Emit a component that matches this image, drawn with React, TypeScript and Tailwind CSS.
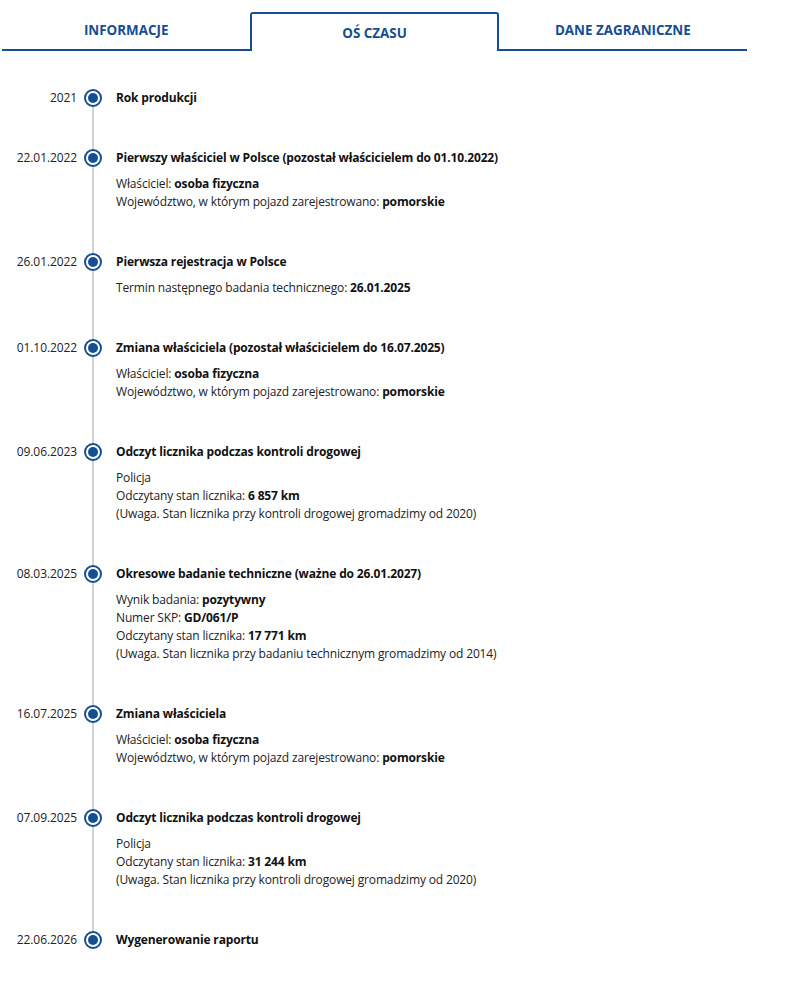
import React from 'react';

type Line = { label?: string; value?: string; text?: string };

interface Entry {
  date: string;
  title: string;
  lines?: Line[];
}

const entries: Entry[] = [
  { date: '2021', title: 'Rok produkcji' },
  {
    date: '22.01.2022',
    title: 'Pierwszy właściciel w Polsce (pozostał właścicielem do 01.10.2022)',
    lines: [
      { label: 'Właściciel: ', value: 'osoba fizyczna' },
      { label: 'Województwo, w którym pojazd zarejestrowano: ', value: 'pomorskie' },
    ],
  },
  {
    date: '26.01.2022',
    title: 'Pierwsza rejestracja w Polsce',
    lines: [{ label: 'Termin następnego badania technicznego: ', value: '26.01.2025' }],
  },
  {
    date: '01.10.2022',
    title: 'Zmiana właściciela (pozostał właścicielem do 16.07.2025)',
    lines: [
      { label: 'Właściciel: ', value: 'osoba fizyczna' },
      { label: 'Województwo, w którym pojazd zarejestrowano: ', value: 'pomorskie' },
    ],
  },
  {
    date: '09.06.2023',
    title: 'Odczyt licznika podczas kontroli drogowej',
    lines: [
      { text: 'Policja' },
      { label: 'Odczytany stan licznika: ', value: '6 857 km' },
      { text: '(Uwaga. Stan licznika przy kontroli drogowej gromadzimy od 2020)' },
    ],
  },
  {
    date: '08.03.2025',
    title: 'Okresowe badanie techniczne (ważne do 26.01.2027)',
    lines: [
      { label: 'Wynik badania: ', value: 'pozytywny' },
      { label: 'Numer SKP: ', value: 'GD/061/P' },
      { label: 'Odczytany stan licznika: ', value: '17 771 km' },
      { text: '(Uwaga. Stan licznika przy badaniu technicznym gromadzimy od 2014)' },
    ],
  },
  {
    date: '16.07.2025',
    title: 'Zmiana właściciela',
    lines: [
      { label: 'Właściciel: ', value: 'osoba fizyczna' },
      { label: 'Województwo, w którym pojazd zarejestrowano: ', value: 'pomorskie' },
    ],
  },
  {
    date: '07.09.2025',
    title: 'Odczyt licznika podczas kontroli drogowej',
    lines: [
      { text: 'Policja' },
      { label: 'Odczytany stan licznika: ', value: '31 244 km' },
      { text: '(Uwaga. Stan licznika przy kontroli drogowej gromadzimy od 2020)' },
    ],
  },
  { date: '22.06.2026', title: 'Wygenerowanie raportu' },
];

const tabs = ['INFORMACJE', 'OŚ CZASU', 'DANE ZAGRANICZNE'];

function Tabs({ active }: { active: number }) {
  return (
    <div className="ml-[2px] grid w-[745px] grid-cols-3 pt-[12px]">
      {tabs.map((t, i) =>
        i === active ? (
          <div
            key={t}
            className="flex h-[39px] items-center justify-center rounded-t-[3px] border-2 border-b-0 border-[#154e91] pt-[2px] text-[13.4px] font-bold text-[#154e91]"
          >
            {t}
          </div>
        ) : (
          <div
            key={t}
            className="flex h-[39px] items-center justify-center border-b-2 border-[#154e91] text-[13.4px] font-bold text-[#154e91]"
          >
            {t}
          </div>
        )
      )}
    </div>
  );
}

function Marker() {
  return (
    <div className="flex h-[18px] w-[18px] shrink-0 items-center justify-center rounded-full border-2 border-[#154e91] bg-white">
      <div className="h-[10px] w-[10px] rounded-full bg-[#154e91]" />
    </div>
  );
}

function TimelineRow({ entry, last }: { entry: Entry; last: boolean }) {
  return (
    <div className="flex">
      <div className="w-[77px] shrink-0 text-right text-[12px] leading-[18px] tracking-[-0.1px] text-[#222]">
        {entry.date}
      </div>
      <div className="ml-[7px] flex w-[18px] shrink-0 flex-col items-center">
        <Marker />
        {!last && <div className="w-[2px] flex-1 bg-[#cfd3d8]" />}
      </div>
      <div className="ml-[14px] pb-[42px] tracking-[-0.15px]">
        <div className="text-[12px] font-bold leading-[18px] text-[#111]">{entry.title}</div>
        {entry.lines && (
          <div className="mt-[8px] text-[12px] leading-[18px] text-[#222]">
            {entry.lines.map((l, i) => (
              <div key={i}>
                {l.text ?? l.label}
                {l.value && <span className="font-bold text-[#111]">{l.value}</span>}
              </div>
            ))}
          </div>
        )}
      </div>
    </div>
  );
}

export default function App() {
  return (
    <div className="min-h-[1000px] w-[804px] bg-white font-['Open_Sans',sans-serif]">
      <Tabs active={1} />
      <div className="mt-[38px]">
        {entries.map((e, i) => (
          <TimelineRow key={e.date + i} entry={e} last={i === entries.length - 1} />
        ))}
      </div>
    </div>
  );
}
